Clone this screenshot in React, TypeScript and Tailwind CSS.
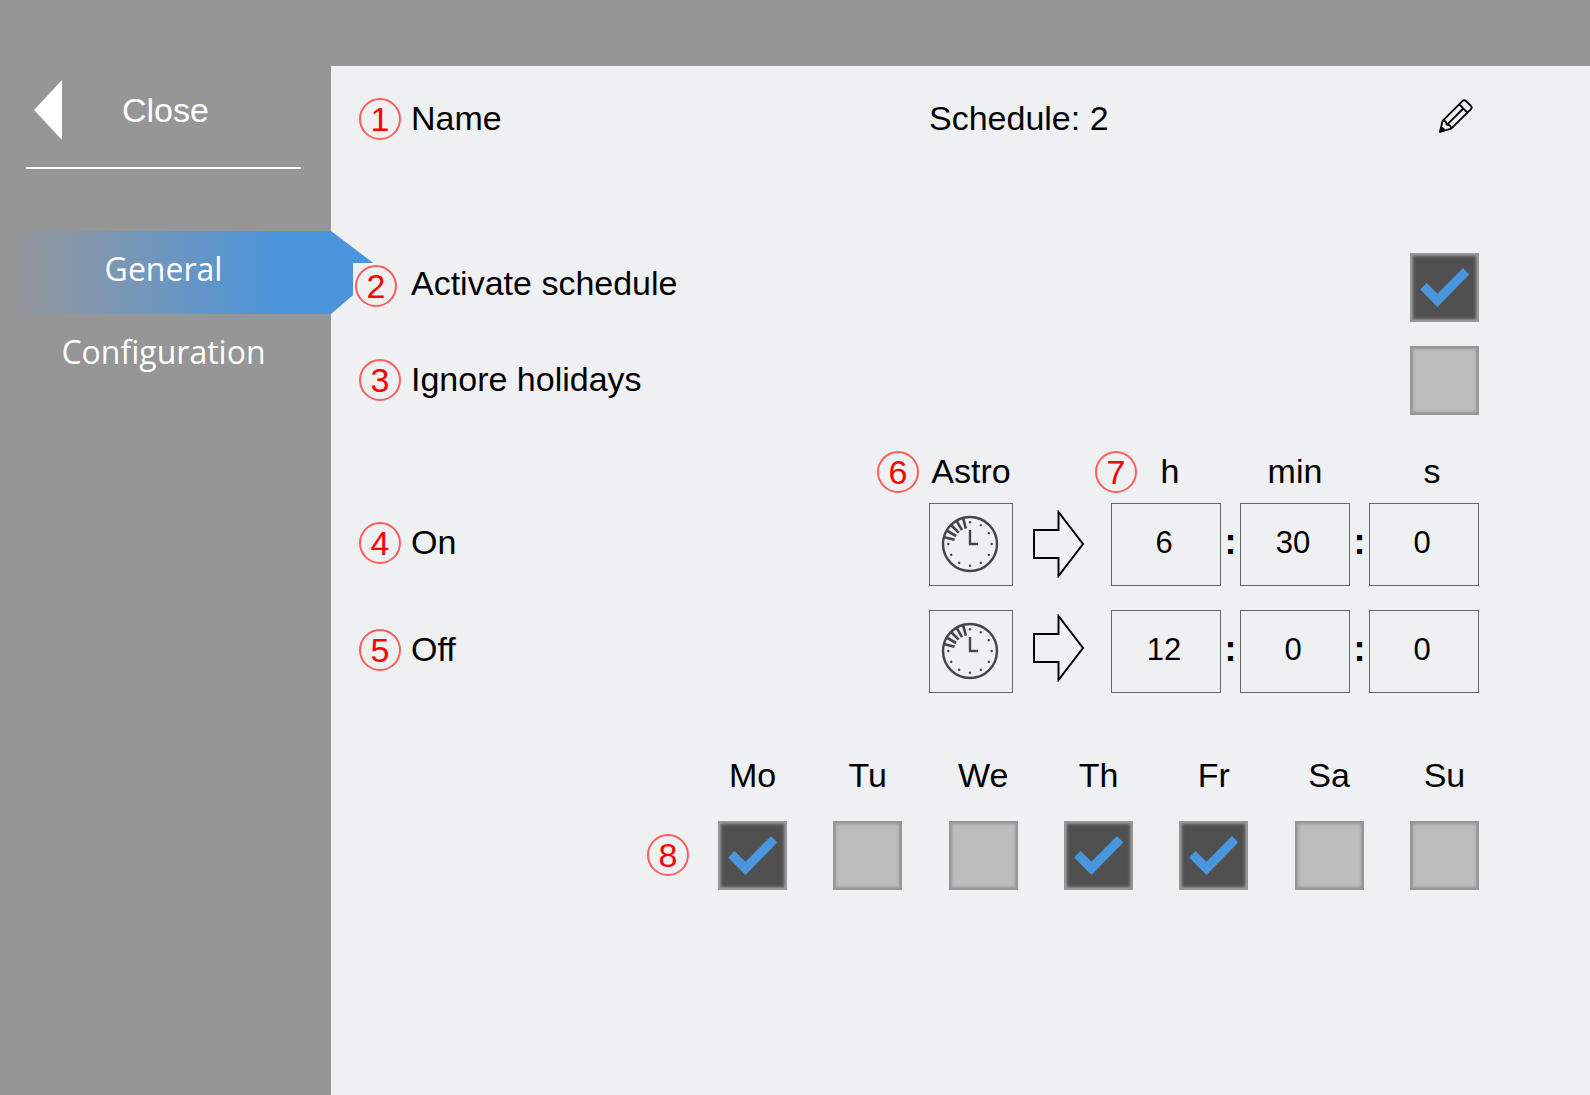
import { useState } from 'react';

const days = [
    { label: 'Mo', checked: true },
    { label: 'Tu', checked: false },
    { label: 'We', checked: false },
    { label: 'Th', checked: true },
    { label: 'Fr', checked: true },
    { label: 'Sa', checked: false },
    { label: 'Su', checked: false },
];

const units = [
    { label: 'h', className: 'pl-2' },
    { label: 'min', className: '' },
    { label: 's', className: 'pl-4' },
];

const times = [
    { id: 'on', label: 'On', marker: 4, values: ['6', '30', '0'] },
    { id: 'off', label: 'Off', marker: 5, values: ['12', '0', '0'] },
];

const Marker = ({ n, className = '' }: { n: number; className?: string }) => (
    <span
        className={`flex h-[42px] w-[42px] items-center justify-center rounded-full border-2 border-[#ff5c5c] text-[34px] leading-10 text-[#ff0000] ${className}`}
    >
        {n}
    </span>
);

const Checkbox = ({ id, defaultChecked }: { id: string; defaultChecked: boolean }) => (
    <span className="relative block h-[69px] w-[69px]">
        <input
            id={id}
            type="checkbox"
            defaultChecked={defaultChecked}
            className="peer block h-full w-full appearance-none border-2 border-[#969696] bg-[#bdbdbd] shadow-[inset_0_0_3px_1px_#969696] checked:bg-[#505050]"
        />
        <svg viewBox="0 0 69 69" className="pointer-events-none absolute inset-0 hidden peer-checked:block">
            <path d="M10.2 36.6 16.6 30 27.5 40.7 53 15 59.2 21.6 27.5 54Z" fill="#4a96dd" />
        </svg>
    </span>
);

const PencilIcon = () => (
    <svg width="34" height="34" viewBox="0 0 34 34" fill="none" stroke="#000" strokeWidth="1.8" strokeLinejoin="round">
        <path d="M.9 33 3.6 21.8 23.6 1.8Q25.2.4 26.8 1.8L32 7Q33.4 8.6 32 10.2L12.2 29.6Z" />
        <path d="M20.2 5.4 28.4 13.6M24.3 9.5 8.4 25.4" />
        <path d="M3.6 21.8Q7.6 21.4 7.6 25.6Q12 25.6 12.2 29.6" />
        <path d="M2.2 28Q5.4 28.4 5.8 31.8L.9 33Z" fill="#000" strokeWidth="1" />
    </svg>
);

const dots = [0, 30, 60, 90, 120, 150, 180, 210, 240, 270];
const hatches = [-15, -30, -45, -60, -75];

const ClockIcon = () => (
    <svg width="58" height="58" viewBox="-29 -29 58 58" fill="none" stroke="#454547">
        <circle r="27" strokeWidth="2.4" />
        {dots.map((deg) => (
            <circle key={deg} cy="-21.7" r="1.2" fill="#454547" stroke="none" transform={`rotate(${deg})`} />
        ))}
        {hatches.map((deg) => (
            <path key={deg} d="M0-26.5V-16" strokeWidth="2.6" transform={`rotate(${deg})`} />
        ))}
        <path d="M0-14V0H8" strokeWidth="2.4" />
    </svg>
);

const ArrowIcon = () => (
    <svg width="52" height="68" viewBox="0 0 52 68" fill="none" stroke="#000" strokeWidth="2">
        <path d="M1 20H25.5V2L50 34 25.5 66V48H1Z" />
    </svg>
);

const Sidebar = () => {
    const [active, setActive] = useState('General');

    return (
        <aside className="w-[331px] shrink-0 bg-[#969696] pt-3.5 text-white">
            <button type="button" className="flex items-center gap-[60px] pl-[34px] text-[34px] leading-10">
                <svg width="28" height="60" viewBox="0 0 28 60" fill="#fff">
                    <path d="M0 30 28 0V60Z" />
                </svg>
                Close
            </button>
            <hr className="mt-[27px] mr-[30px] ml-[26px] border-t-2 border-white" />

            <nav className="mt-[62px] flex flex-col font-['Open_Sans',sans-serif] text-[32px]">
                {['General', 'Configuration'].map((item) => (
                    <button
                        key={item}
                        type="button"
                        onClick={() => setActive(item)}
                        className={`relative h-[83px] pr-1 pb-2 text-center ${
                            active === item ? 'bg-linear-to-r from-[#969696] from-1% to-[#4a94db] to-84%' : ''
                        }`}
                    >
                        {item}
                        {active === item && (
                            <svg width="52" height="83" viewBox="0 0 52 83" className="absolute top-0 left-full" fill="#4a94db">
                                <path d="M0 0 51.5 39 0 83Z" />
                            </svg>
                        )}
                    </button>
                ))}
            </nav>
        </aside>
    );
};

const App = () => {
    return (
        <div className="flex min-h-screen flex-col bg-[#eff0f2] font-['Liberation_Sans',Arial,sans-serif] text-[34px] leading-10 text-black">
            <header className="h-[66px] bg-[#969696]" />

            <div className="flex flex-1">
                <Sidebar />

                <main className="relative flex-1 pt-8 pr-[111px] pl-20">
                    {/* Name */}
                    <section className="flex items-center justify-between">
                        <h2 className="relative">
                            <Marker n={1} className="absolute top-0 -left-[52px]" />
                            Name
                        </h2>
                        <div className="flex w-[550px] items-center justify-between">
                            <span>Schedule: 2</span>
                            <button type="button" aria-label="Edit name" className="mr-1.5 pb-1">
                                <PencilIcon />
                            </button>
                        </div>
                    </section>

                    {/* Options */}
                    <section className="mt-[115px] flex justify-between">
                        <div className="flex flex-col gap-14 pt-2.5">
                            <label htmlFor="activate" className="relative">
                                <span className="absolute top-0 -left-[58px] bg-[#eff0f2] p-0.5">
                                    <Marker n={2} />
                                </span>
                                Activate schedule
                            </label>
                            <label htmlFor="holidays" className="relative">
                                <Marker n={3} className="absolute top-0 -left-[52px]" />
                                Ignore holidays
                            </label>
                        </div>
                        <div className="flex flex-col gap-6">
                            <Checkbox id="activate" defaultChecked />
                            <Checkbox id="holidays" defaultChecked={false} />
                        </div>
                    </section>

                    {/* Switching times */}
                    <section className="mt-9 flex justify-between">
                        <div className="flex flex-col gap-[67px] pt-[71px]">
                            {times.map((time) => (
                                <h3 key={time.id} className="relative">
                                    <Marker n={time.marker} className="absolute top-0 -left-[52px]" />
                                    {time.label}
                                </h3>
                            ))}
                        </div>

                        <div className="flex">
                            <div className="relative flex flex-col">
                                <Marker n={6} className="absolute top-0 -left-[52px]" />
                                <h3 className="mb-3 text-center">Astro</h3>
                                <div className="flex flex-col gap-6">
                                    {times.map((time) => (
                                        <button
                                            key={time.id}
                                            type="button"
                                            aria-label={`Astro ${time.label}`}
                                            className="flex h-[83px] w-[84px] items-center justify-center border border-[#666] pr-0.5 pb-0.5"
                                        >
                                            <ClockIcon />
                                        </button>
                                    ))}
                                </div>
                            </div>

                            <div className="ml-5 flex flex-col gap-9 pt-[59px]">
                                <ArrowIcon />
                                <ArrowIcon />
                            </div>

                            <div className="relative ml-[26px]">
                                <Marker n={7} className="absolute top-0 -left-4" />
                                <div className="mb-3 flex gap-[19px]">
                                    {units.map((unit) => (
                                        <span key={unit.label} className={`w-[110px] text-center ${unit.className}`}>
                                            {unit.label}
                                        </span>
                                    ))}
                                </div>
                                <div className="flex flex-col gap-6">
                                    {times.map((time) => (
                                        <div key={time.id} className="flex items-center">
                                            {time.values.map((value, i) => (
                                                <div key={units[i].label} className="flex items-center">
                                                    {i > 0 && <span className="w-[19px] pb-1.5 text-center text-4xl font-bold">:</span>}
                                                    <input
                                                        type="text"
                                                        inputMode="numeric"
                                                        aria-label={`${time.label} ${units[i].label}`}
                                                        defaultValue={value}
                                                        className="h-[83px] w-[110px] border border-[#666] bg-transparent pr-1 pb-1 text-center text-[31px]"
                                                    />
                                                </div>
                                            ))}
                                        </div>
                                    ))}
                                </div>
                            </div>
                        </div>
                    </section>

                    {/* Weekdays */}
                    <section className="mt-[62px] flex justify-end">
                        <div className="relative flex w-[761px] justify-between">
                            <Marker n={8} className="absolute bottom-3.5 -left-[71px]" />
                            {days.map((day) => (
                                <div key={day.label} className="flex flex-col gap-[26px] text-center">
                                    <label htmlFor={day.label}>{day.label}</label>
                                    <Checkbox id={day.label} defaultChecked={day.checked} />
                                </div>
                            ))}
                        </div>
                    </section>
                </main>
            </div>
        </div>
    );
};

export default App;
